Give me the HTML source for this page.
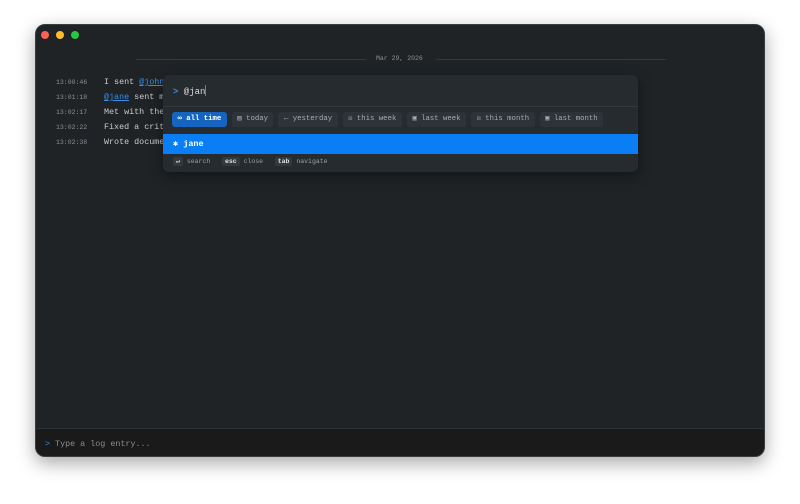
<!DOCTYPE html>
<html><head><style>
*{margin:0;padding:0;box-sizing:border-box}
body{width:800px;height:504px;background:#fff;font-family:"Liberation Mono",monospace;position:relative;overflow:hidden}
.win{position:absolute;left:35px;top:24px;width:730px;height:433px;background:#1f2326;border-radius:10px;overflow:hidden;box-shadow:0 6px 18px rgba(0,0,0,.35);border:1px solid #3a3d40}
.dot{position:absolute;top:6px;width:8px;height:8px;border-radius:50%}
.date{position:absolute;top:30px;left:0;right:0;height:8px}
.line{position:absolute;top:4px;height:1px;background:#33383c}
.dt{position:absolute;left:340px;top:0;font-size:6.5px;color:#8a9096}
.row{position:absolute;left:20px;font-size:8.4px;color:#c9ccce;white-space:pre}
.row .t{display:inline-block;width:48px;font-size:6.5px;color:#8a9096}
.m{color:#3a8ee6;text-decoration:underline}
.bot{position:absolute;left:0;right:0;top:403px;bottom:0;background:#1a1a1a;border-top:1px solid #2e3236;font-size:8.4px;color:#8a8d90;padding:10px 0 0 9px}
.pal{position:absolute;left:127px;top:50px;width:475px;height:97px;background:#262b2f;border-radius:6px;box-shadow:0 4px 14px rgba(0,0,0,.4)}
.inp{height:32px;border-bottom:1px solid #33383c;font-size:9px;color:#d8dadc;padding:10px 0 0 10px}
.chips{position:absolute;top:37px;left:9px;display:flex;gap:5px}
.chip{height:15px;padding:0 5.5px;background:#2d3338;border-radius:3px;font-size:7.3px;color:#a8adb2;line-height:15px;white-space:nowrap}
.chip.on{background:#1565c0;color:#fff;font-weight:bold}
.sel{position:absolute;top:59px;left:0;right:0;height:20px;background:#0a7ff5;color:#fff;font-size:8.5px;font-weight:bold;padding:5px 0 0 10px}
.foot{position:absolute;top:82px;left:10px;font-size:6.5px;color:#9aa0a5;white-space:pre}
.k{background:#33393e;color:#e0e0e0;padding:1px 3px;border-radius:2px;font-weight:bold}
</style></head><body>
<div class="win">
<div class="dot" style="left:5px;background:#fe5f57"></div>
<div class="dot" style="left:20px;background:#febc2e"></div>
<div class="dot" style="left:35px;background:#28c840"></div>
<div class="date"><div class="line" style="left:100px;width:230px"></div><div class="dt">Mar 29, 2026</div><div class="line" style="left:400px;width:230px"></div></div>
<div class="row" style="top:52px"><span class="t">13:00:46</span>I sent <span class="m">@john</span></div>
<div class="row" style="top:67px"><span class="t">13:01:18</span><span class="m">@jane</span> sent m</div>
<div class="row" style="top:82px"><span class="t">13:02:17</span>Met with the</div>
<div class="row" style="top:97px"><span class="t">13:02:22</span>Fixed a crit</div>
<div class="row" style="top:112px"><span class="t">13:02:38</span>Wrote docume</div>
<div class="pal">
<div class="inp"><span style="color:#2f8cf0;font-weight:bold">&gt;</span> @jan<span style="display:inline-block;width:1px;height:11px;background:#2f8cf0;vertical-align:-2px"></span></div>
<div class="chips">
<div class="chip on">∞ all time</div><div class="chip">▤ today</div><div class="chip">← yesterday</div><div class="chip">☒ this week</div><div class="chip">▣ last week</div><div class="chip">☒ this month</div><div class="chip">▣ last month</div>
</div>
<div class="sel">✱ jane</div>
<div class="foot"><span class="k">↵</span> search   <span class="k">esc</span> close   <span class="k">tab</span> navigate</div>
</div>
<div class="bot"><span style="color:#2f8cf0">&gt;</span> Type a log entry...</div>
</div>
</body></html>
